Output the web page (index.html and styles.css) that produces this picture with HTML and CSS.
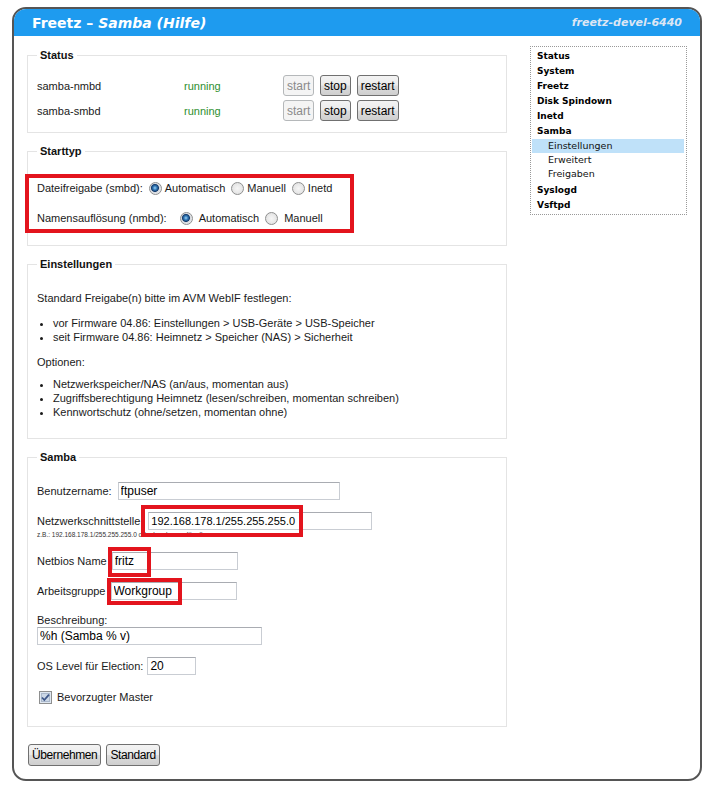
FILE: index.html
```html
<!DOCTYPE html>
<html lang="de">
<head>
    <meta charset="UTF-8">
    <title>Freetz - Samba (Hilfe)</title>
    <link rel="stylesheet" href="styles.css">
</head>
<body>

<div class="frame">
    <div class="header">
        <h1 class="title">Freetz &ndash; <i>Samba (Hilfe)</i></h1>
        <span class="host">freetz-devel-6440</span>
    </div>

    <div class="main">
        <div class="content">

            <!-- Dienste -->
            <fieldset class="box box-status">
                <legend>Status</legend>
                <div class="svc-row">
                    <span class="svc-name">samba-nmbd</span>
                    <span class="svc-state">running</span>
                    <button class="btn btn-start" disabled>start</button>
                    <button class="btn">stop</button>
                    <button class="btn">restart</button>
                </div>
                <div class="svc-row">
                    <span class="svc-name">samba-smbd</span>
                    <span class="svc-state">running</span>
                    <button class="btn btn-start" disabled>start</button>
                    <button class="btn">stop</button>
                    <button class="btn">restart</button>
                </div>
            </fieldset>

            <fieldset class="box box-start">
                <legend>Starttyp</legend>
                <div class="marked-group">
                    <div class="radio-row">
                        <span class="radio-label">Dateifreigabe (smbd):</span>
                        <input type="radio" name="smbd" checked><span class="opt">Automatisch</span>
                        <input type="radio" name="smbd"><span class="opt">Manuell</span>
                        <input type="radio" name="smbd"><span class="opt">Inetd</span>
                    </div>
                    <div class="radio-row wide">
                        <span class="radio-label">Namensauflösung (nmbd):</span>
                        <input type="radio" name="nmbd" checked><span class="opt">Automatisch</span>
                        <input type="radio" name="nmbd"><span class="opt">Manuell</span>
                    </div>
                </div>
            </fieldset>

            <fieldset class="box box-info">
                <legend>Einstellungen</legend>
                <p>Standard Freigabe(n) bitte im AVM WebIF festlegen:</p>
                <ul>
                    <li>vor Firmware 04.86: Einstellungen &gt; USB-Geräte &gt; USB-Speicher</li>
                    <li>seit Firmware 04.86: Heimnetz &gt; Speicher (NAS) &gt; Sicherheit</li>
                </ul>
                <p>Optionen:</p>
                <ul class="options">
                    <li>Netzwerkspeicher/NAS (an/aus, momentan aus)</li>
                    <li>Zugriffsberechtigung Heimnetz (lesen/schreiben, momentan schreiben)</li>
                    <li>Kennwortschutz (ohne/setzen, momentan ohne)</li>
                </ul>
            </fieldset>

            <fieldset class="box box-samba">
                <legend>Samba</legend>
                <div class="field">
                    <span>Benutzername:</span>
                    <input type="text" class="inp inp-user" value="ftpuser">
                </div>
                <div class="field field-iface">
                    <span>Netzwerkschnittstelle</span>
                    <span class="inp-wrap">
                        <input type="text" class="inp inp-iface" value="192.168.178.1/255.255.255.0">
                        <span class="mark mark-iface"></span>
                    </span>
                </div>
                <div class="hint">z.B.: 192.168.178.1/255.255.255.0 oder leer lassen für alle</div>
                <div class="field">
                    <span>Netbios Name</span>
                    <span class="inp-wrap">
                        <input type="text" class="inp inp-short" value="fritz">
                        <span class="mark mark-netbios"></span>
                    </span>
                </div>
                <div class="field">
                    <span>Arbeitsgruppe</span>
                    <span class="inp-wrap">
                        <input type="text" class="inp inp-short" value="Workgroup">
                        <span class="mark mark-group"></span>
                    </span>
                </div>
                <div class="desc-label">Beschreibung:</div>
                <input type="text" class="inp inp-desc" value="%h (Samba % v)">
                <div class="field field-level">
                    <span>OS Level für Election:</span>
                    <input type="text" class="inp inp-level" value="20">
                </div>
                <div class="check-row">
                    <span class="check">
                        <svg width="13" height="13" viewBox="0 0 13 13">
                            <rect x="0.5" y="0.5" width="12" height="12" fill="#dfe7f1" stroke="#8e8f8f"/>
                            <rect x="2.5" y="2.5" width="8" height="8" fill="#cbd7e6" stroke="#aab8cb"/>
                            <path d="M3 6.5 L5.3 9 L10 3.6" fill="none" stroke="#3d5688" stroke-width="1.8"/>
                        </svg>
                    </span>
                    <span>Bevorzugter Master</span>
                </div>
            </fieldset>

            <div class="actions">
                <button class="btn btn-big">Übernehmen</button>
                <button class="btn btn-big">Standard</button>
            </div>
        </div>

        <div class="menu">
            <a href="#">Status</a>
            <a href="#">System</a>
            <a href="#">Freetz</a>
            <a href="#">Disk Spindown</a>
            <a href="#">Inetd</a>
            <a href="#">Samba</a>
            <div class="sub">
                <a href="#" class="active">Einstellungen</a>
                <a href="#">Erweitert</a>
                <a href="#">Freigaben</a>
            </div>
            <a href="#">Syslogd</a>
            <a href="#">Vsftpd</a>
        </div>
    </div>
</div>

</body>
</html>
```

FILE: styles.css
```css
body {
    margin: 0;
    background: #fff;
    font-family: "Liberation Sans", Arial, sans-serif;
    font-size: 11px;
    color: #1a1a1a;
}
.frame {
    margin: 7px 0 0 12px;
    width: 686px;
    border: 2px solid #555;
    border-radius: 14px;
    overflow: hidden;
    background: #fff;
}
.header {
    height: 27px;
    display: flex;
    justify-content: space-between;
    align-items: center;
    padding: 0 18px 0 18px;
    background-color: #1e9bef;
    font-family: "DejaVu Sans", Verdana, sans-serif;
    font-weight: bold;
}
.title {
    margin: 0;
    font-size: 14px;
    color: #fff;
}
.host {
    font-size: 11px;
    font-style: italic;
    color: #dde6f4;
}
.main {
    display: flex;
    align-items: flex-start;
    padding: 10px 13px 13px 13px;
}
.content {
    width: 480px;
}

/* fieldsets */
.box {
    margin: 3px 0 12px;
    padding: 11px 9px 9px;
    border: 1px solid #e4e4e4;
}
.box legend {
    padding: 0 3px;
    font-weight: bold;
    font-size: 11px;
    line-height: 13px;
    color: #111;
}

/* status */
.svc-row {
    display: flex;
    align-items: center;
    height: 25px;
}
.svc-name {
    width: 147px;
}
.svc-state {
    width: 99px;
    color: #2f8f2f;
}
.btn {
    height: 21px;
    padding: 0 3px;
    margin-right: 6px;
    font-family: "Liberation Sans", Arial, sans-serif;
    font-size: 12px;
    color: #000;
    border: 1px solid #707070;
    border-radius: 3px;
    background: linear-gradient(#f3f3f3 0%, #ebebeb 48%, #dcdcdc 52%, #cfcfcf 100%);
}
.btn-start {
    width: 31px;
}
.btn:disabled {
    color: #8a8a8a;
    border-color: #b5b8ba;
    background: #f4f4f4;
}

/* starttyp */
.box-start {
    padding: 16px 9px 12px;
}
.marked-group {
    width: 313px;
    margin-left: -12px;
    padding: 0 0 1px 8px;
    border: 4px solid #e3141d;
}
.radio-row {
    display: flex;
    align-items: center;
    height: 20px;
}
.radio-row + .radio-row {
    margin-top: 10px;
}
.radio-row input {
    appearance: none;
    -webkit-appearance: none;
    width: 13px;
    height: 13px;
    margin: 0 3px 0 6px;
    border: 1px solid #8e8f8f;
    border-radius: 50%;
    background: radial-gradient(circle at 50% 50%, #f6f6f6 0, #dcdcdc 100%);
}
.radio-row input:checked {
    background: radial-gradient(circle at 45% 45%, #9fd3f5 0, #2f78b8 2px, #183e6e 3.6px, #d8dbe0 4.4px, #fbfbfb 100%);
}
.radio-row.wide input {
    margin: 0 6px 0 6px;
}
.radio-row.wide input:first-of-type {
    margin-left: 13px;
}

/* einstellungen */
.box-info {
    padding: 20px 9px 19px;
}
.box-info p {
    margin: 0;
    line-height: 14px;
}
.box-info ul {
    margin: 11px 0;
    padding-left: 16px;
    line-height: 14px;
}
.box-info ul.options {
    margin: 8px 0 0;
}

/* samba */
.box-samba {
    padding: 17px 9px 19px;
}
.field {
    display: flex;
    align-items: center;
    height: 20px;
    margin-bottom: 10px;
}
.field-iface {
    margin-bottom: 0;
}
.inp {
    height: 18px;
    box-sizing: border-box;
    margin: 0 0 0 6px;
    padding: 0 2px;
    font-family: "Liberation Sans", Arial, sans-serif;
    font-size: 12px;
    color: #000;
    border: 1px solid #c9cdd3;
    border-top-color: #a9acb2;
}
.inp-user { width: 222px; }
.inp-iface { width: 224px; margin-left: 8px; font-size: 11px; }
.inp-short { width: 126px; margin-left: 5px; }
.inp-desc { width: 225px; margin: 0 0 11px; display: block; }
.inp-level { width: 49px; margin-left: 4px; }
.inp-wrap {
    position: relative;
    display: inline-flex;
}
.mark {
    position: absolute;
    border: 4px solid #e3141d;
    box-sizing: border-box;
}
.mark-iface {
    left: 1px;
    top: -7px;
    width: 162px;
    height: 32px;
}
.mark-netbios {
    left: 1px;
    top: -5px;
    width: 43px;
    height: 30px;
}
.mark-group {
    left: 1px;
    top: -4px;
    width: 75px;
    height: 27px;
}
.hint {
    font-size: 6.5px;
    line-height: 7px;
    margin-bottom: 13px;
    color: #333;
}
.desc-label {
    line-height: 14px;
    margin-top: 12px;
}
.field-level {
    margin-bottom: 11px;
}
.check-row {
    display: flex;
    align-items: center;
    height: 20px;
    padding-left: 2px;
}
.check {
    display: inline-flex;
    margin-right: 5px;
}

.actions {
    padding-top: 5px;
    display: flex;
}
.btn-big {
    height: 22px;
    padding: 0 3px;
    margin-left: 1px;
    margin-right: 4px;
    font-size: 12px;
    letter-spacing: -0.4px;
}

/* menu */
.menu {
    width: 155px;
    margin-left: 23px;
    padding: 2px 0 1px;
    border: 1px dotted #999;
}
.menu a {
    display: block;
    padding-left: 6px;
    line-height: 15px;
    font-family: "DejaVu Sans", Verdana, sans-serif;
    font-size: 9px;
    font-weight: bold;
    color: #000;
    text-decoration: none;
}
.menu .sub {
    margin-bottom: 2px;
}
.menu .sub a {
    margin: 0 2px 0 1px;
    padding-left: 16px;
    line-height: 14px;
    font-size: 9.5px;
    font-weight: normal;
    color: #111;
}
.menu .sub a.active {
    background-color: #bfe1f9;
}
```
